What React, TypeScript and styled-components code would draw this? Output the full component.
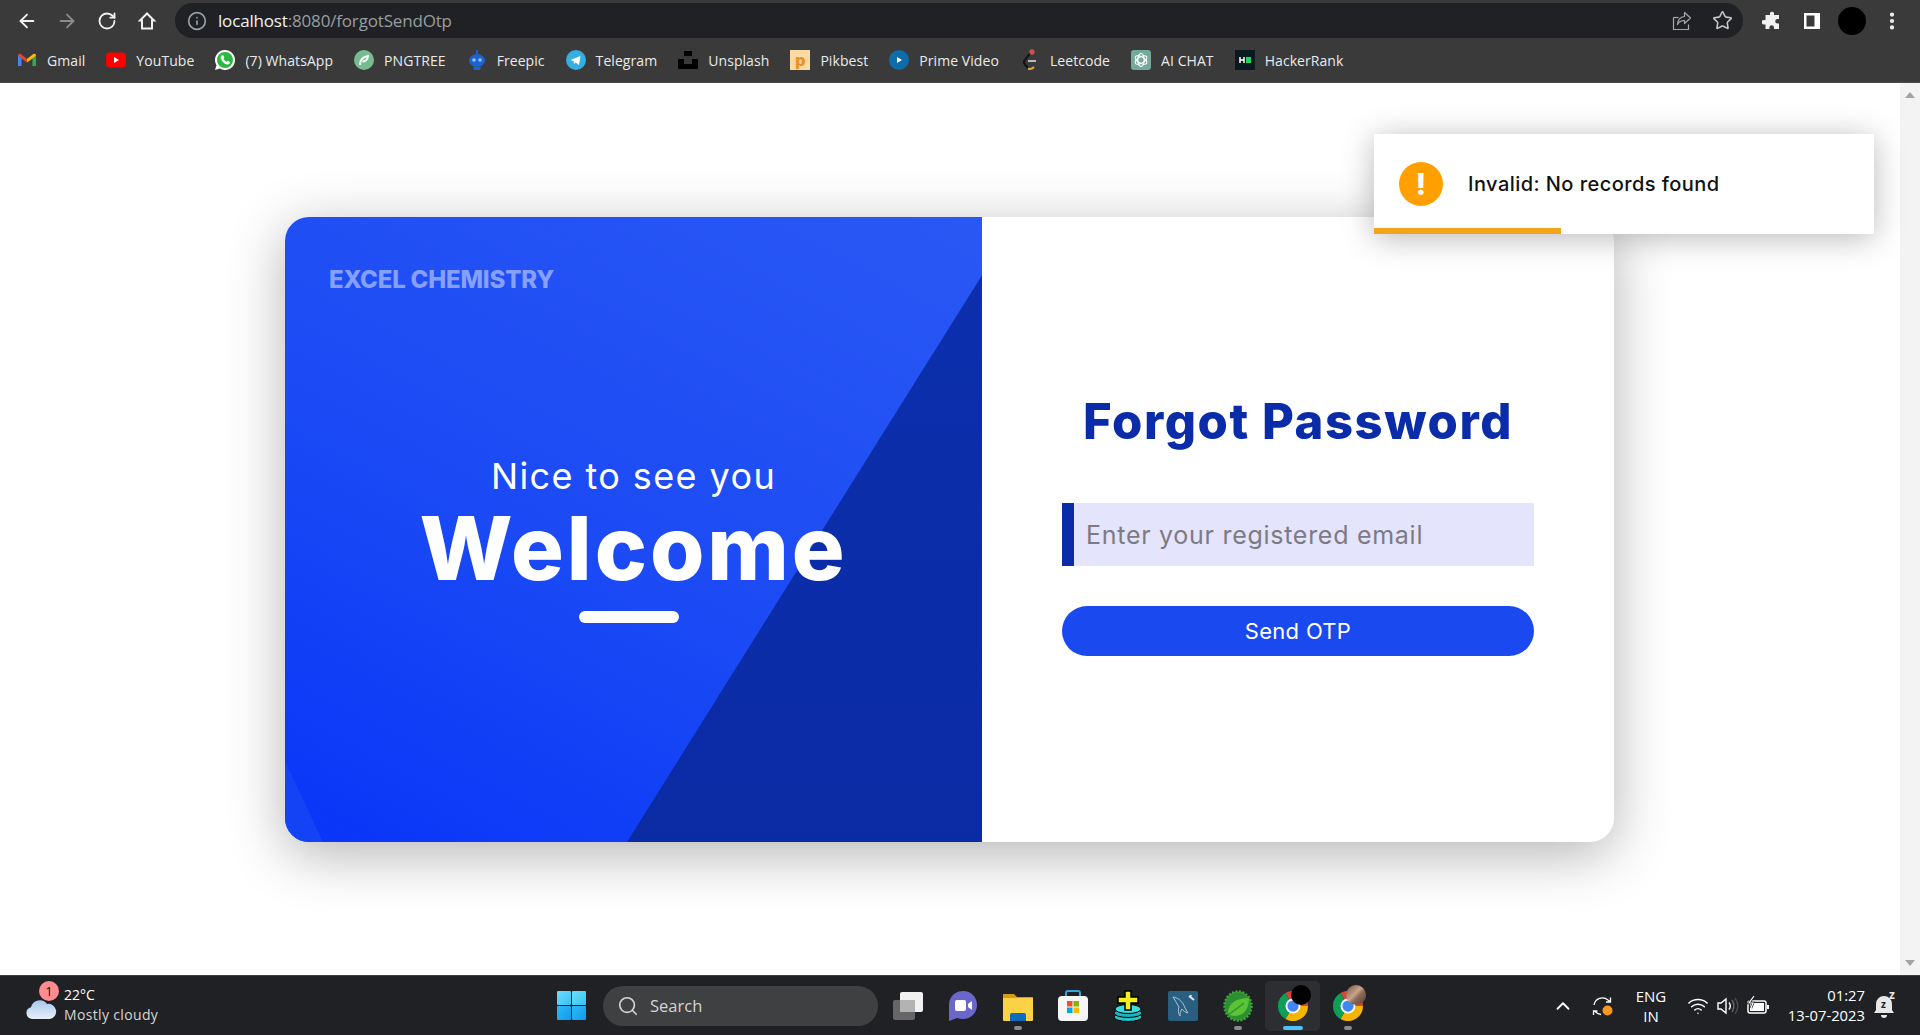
import React from 'react';
import styled, { createGlobalStyle } from 'styled-components';
import { ArrowLeft, ArrowRight, RotateCw, Info, Star, Search, ChevronUp, Wifi, MoreVertical } from 'lucide-react';

const GlobalStyle = createGlobalStyle`
  html, body {
    margin: 0;
    padding: 0;
    height: 100%;
    overflow: hidden;
    background: #fff;
  }
  * {
    box-sizing: border-box;
  }
`;

const Screen = styled.div`
  width: 100%;
  height: 100vh;
  display: flex;
  flex-direction: column;
  font-family: 'Open Sans', 'Noto Sans', sans-serif;
`;

/* browser chrome */
const BrowserBar = styled.header`
  height: 83px;
  flex: none;
  background: #3a3a3a;
  border-bottom: 1px solid #4a4a4a;
`;

const Toolbar = styled.div`
  height: 41px;
  padding: 3px 8px 0 7px;
  display: flex;
  align-items: flex-start;
`;

const ToolButton = styled.div<{ $dim?: boolean }>`
  width: 40px;
  height: 35px;
  flex: none;
  display: flex;
  align-items: center;
  justify-content: center;
  color: ${(p) => (p.$dim ? '#8b8b8b' : '#f1f1f1')};
`;

const UrlBar = styled.div`
  flex: 1;
  height: 35px;
  margin: 0 9px 0 8px;
  padding: 0 1px 0 12px;
  display: flex;
  align-items: center;
  background: #202124;
  border-radius: 18px;
  color: #9aa0a6;
`;

const UrlText = styled.div`
  flex: 1;
  margin-left: 11px;
  font-size: 17px;
  letter-spacing: -0.17px;
  color: #9a9da1;
  b {
    font-weight: 400;
    color: #f1f3f4;
  }
`;

const Avatar = styled.span`
  width: 28px;
  height: 28px;
  border-radius: 50%;
  background: #000;
`;

const Bookmarks = styled.nav`
  height: 41px;
  padding: 0 0 3px 17px;
  display: flex;
  align-items: center;
  gap: 21px;
`;

const Bookmark = styled.div`
  display: flex;
  align-items: center;
  gap: 10px;
  font-size: 14px;
  letter-spacing: 0.07px;
  color: #e8eaed;
  white-space: nowrap;
  svg {
    display: block;
    flex: none;
  }
`;

const PikbestMark = styled.span`
  width: 20px;
  height: 20px;
  flex: none;
  display: flex;
  align-items: center;
  justify-content: center;
  background: #fbd9a0;
  color: #ef8f1e;
  font-family: Inter, sans-serif;
  font-size: 16px;
  font-weight: 800;
  line-height: 18px;
  letter-spacing: 0;
`;

/* page */
const PageRow = styled.div`
  flex: 1;
  min-height: 0;
  display: flex;
`;

const Page = styled.main`
  flex: 1;
  position: relative;
  display: flex;
  align-items: center;
  justify-content: center;
  background: #fff;
`;

const ScrollTrack = styled.div`
  width: 20px;
  flex: none;
  padding: 9px 0;
  display: flex;
  flex-direction: column;
  justify-content: space-between;
  align-items: center;
  background: #f3f3f3;
`;

const ScrollArrow = styled.span<{ $down?: boolean }>`
  width: 0;
  height: 0;
  border-left: 5px solid transparent;
  border-right: 5px solid transparent;
  ${(p) => (p.$down ? 'border-top: 6px solid #a3a3a3;' : 'border-bottom: 6px solid #a3a3a3;')}
`;

const Card = styled.section`
  width: 1329px;
  height: 625px;
  margin: 1px 1px 0 0;
  flex: none;
  display: flex;
  border-radius: 24px;
  background: #fff;
  box-shadow: 0 12px 56px rgba(0, 0, 0, 0.3);
  font-family: Inter, 'Liberation Sans', sans-serif;
`;

const WelcomePanel = styled.div`
  width: 697px;
  flex: none;
  position: relative;
  overflow: hidden;
  padding: 48px 44px;
  display: flex;
  flex-direction: column;
  border-radius: 24px 0 0 24px;
  color: #fff;
  background: linear-gradient(28deg, #0835f8 0%, #1b4af5 45%, #2a58f4 100%);
  &::before {
    content: '';
    position: absolute;
    inset: 0;
    background: linear-gradient(180deg, #0c2fae, #0b2ba5);
    clip-path: polygon(100% 9.3%, 100% 100%, 342px 100%);
  }
  &::after {
    content: '';
    position: absolute;
    inset: 0;
    background: #1442f5;
    clip-path: polygon(0 87%, 38px 100%, 0 100%);
  }
`;

const Brand = styled.div`
  position: relative;
  z-index: 1;
  font-size: 24px;
  line-height: 30px;
  font-weight: 800;
  letter-spacing: -0.2px;
  color: #86a0ff;
`;

const Greeting = styled.div`
  position: relative;
  z-index: 1;
  margin-top: 159px;
  display: flex;
  flex-direction: column;
  align-items: center;
`;

const Nice = styled.div`
  font-size: 36px;
  line-height: 44px;
  font-weight: 400;
  letter-spacing: 1.4px;
`;

const BigWelcome = styled.div`
  margin-top: 4px;
  font-size: 88px;
  line-height: 92px;
  font-weight: 800;
  letter-spacing: 2.9px;
`;

const Underline = styled.span`
  width: 100px;
  height: 12px;
  margin: 17px 10px 0 0;
  border-radius: 6px;
  background: #fff;
`;

const FormPanel = styled.div`
  flex: 1;
  padding-top: 174px;
  display: flex;
  flex-direction: column;
  align-items: center;
`;

const Title = styled.h1`
  margin: 0;
  font-size: 49px;
  line-height: 61px;
  font-weight: 800;
  letter-spacing: 1.55px;
  white-space: nowrap;
  color: #0a2ca9;
`;

const EmailInput = styled.input`
  width: 472px;
  height: 63px;
  margin-top: 51px;
  padding: 0 12px;
  border: 0;
  border-left: 12px solid #0a2ca9;
  outline: none;
  background: #e4e4fc;
  font-family: inherit;
  font-size: 25px;
  letter-spacing: 0.72px;
  &::placeholder {
    color: #7d7a84;
    opacity: 1;
  }
`;

const SendButton = styled.button`
  width: 472px;
  height: 50px;
  margin-top: 40px;
  border: 0;
  border-radius: 25px;
  background: #1a49f0;
  color: #fff;
  font-family: inherit;
  font-size: 22px;
  font-weight: 400;
  letter-spacing: 0.3px;
`;

const Toast = styled.div`
  position: absolute;
  top: 51px;
  right: 26px;
  width: 500px;
  height: 100px;
  padding: 0 25px;
  display: flex;
  align-items: center;
  gap: 25px;
  background: #fff;
  box-shadow: 0 4px 30px rgba(0, 0, 0, 0.28);
  font-family: Inter, 'Liberation Sans', sans-serif;
  font-size: 20px;
  font-weight: 450;
  letter-spacing: 0.45px;
  color: #111;
`;

const ToastIcon = styled.span`
  width: 44px;
  height: 44px;
  flex: none;
  border-radius: 50%;
  display: flex;
  align-items: center;
  justify-content: center;
  background: #ffa000;
  color: #fff;
  font-size: 30px;
  font-weight: 800;
`;

const ToastProgress = styled.span`
  position: absolute;
  left: 0;
  bottom: 0;
  height: 6px;
  background: #f5a31a;
`;

/* windows taskbar */
const Taskbar = styled.footer`
  height: 60px;
  flex: none;
  display: flex;
  align-items: center;
  background: #202124;
  border-top: 1px solid #3c3d40;
  color: #fff;
  font-size: 14px;
`;

const Weather = styled.div`
  width: 557px;
  flex: none;
  padding-left: 25px;
  display: flex;
  align-items: center;
  gap: 9px;
`;

const WeatherIcon = styled.div`
  position: relative;
  width: 30px;
  height: 24px;
  margin-top: 4px;
`;

const WeatherBadge = styled.span`
  position: absolute;
  top: -15px;
  left: 14px;
  width: 20px;
  height: 20px;
  border-radius: 50%;
  display: flex;
  align-items: center;
  justify-content: center;
  background: #ff8b90;
  color: #111;
  font-size: 13px;
`;

const WeatherText = styled.div`
  margin-top: -2px;
  line-height: 20px;
  span {
    display: block;
    color: #d6d6d6;
    letter-spacing: 0.35px;
  }
`;

const StartLogo = styled.div`
  width: 29px;
  height: 29px;
  margin-right: 17px;
  flex: none;
  display: grid;
  grid-template-columns: 1fr 1fr;
  gap: 1px;
`;

const StartPane = styled.span<{ $top?: boolean }>`
  border-radius: 1px;
  background: ${(p) => (p.$top ? 'linear-gradient(135deg, #6fdcfb, #36c3f5)' : 'linear-gradient(135deg, #2fb8f6, #0f9af0)')};
`;

const SearchPill = styled.div`
  width: 275px;
  height: 40px;
  margin-right: 2px;
  flex: none;
  padding-left: 14px;
  display: flex;
  align-items: center;
  gap: 11px;
  border-radius: 20px;
  background: #3f4042;
  font-size: 16.5px;
  color: #d4d4d4;
`;

const TaskCell = styled.div<{ $active?: boolean }>`
  position: relative;
  width: 55px;
  height: 50px;
  flex: none;
  display: flex;
  align-items: center;
  justify-content: center;
  border-radius: 5px;
  background: ${(p) => (p.$active ? '#2d2e31' : 'transparent')};
  svg {
    display: block;
  }
`;

const TaskDot = styled.span<{ $active?: boolean }>`
  position: absolute;
  left: 50%;
  bottom: 1px;
  width: ${(p) => (p.$active ? '20px' : '8px')};
  height: 4px;
  margin-left: ${(p) => (p.$active ? '-10px' : '-4px')};
  border-radius: 2px;
  background: ${(p) => (p.$active ? '#4cc2ff' : '#8a8a8a')};
`;

const Tray = styled.div`
  margin-left: auto;
  padding-right: 20px;
  display: flex;
  align-items: center;
`;

const TrayIcon = styled.div<{ $w?: number; $gap?: number }>`
  position: relative;
  width: ${(p) => p.$w ?? 30}px;
  margin-left: ${(p) => p.$gap ?? 0}px;
  display: flex;
  align-items: center;
  justify-content: center;
  svg {
    display: block;
  }
`;

const SnoozeZ = styled.span<{ $big?: boolean }>`
  position: absolute;
  top: ${(p) => (p.$big ? '-3px' : '6px')};
  left: ${(p) => (p.$big ? '17px' : '9px')};
  font-size: ${(p) => (p.$big ? '12px' : '10px')};
  line-height: 12px;
  font-weight: 700;
  color: ${(p) => (p.$big ? '#e8e8e8' : '#202124')};
`;

const Lang = styled.div`
  width: 50px;
  margin: 0 7px 0 8px;
  text-align: center;
  line-height: 20px;
  font-size: 15px;
`;

const Clock = styled.div`
  width: 92px;
  margin: -2px 7px 0 0;
  text-align: right;
  line-height: 20px;
  font-size: 14.8px;
`;

const ProfileBadge = styled.span<{ $photo?: boolean }>`
  position: absolute;
  top: 4px;
  left: 26px;
  width: 20px;
  height: 20px;
  border-radius: 50%;
  background: ${(p) => (p.$photo ? 'linear-gradient(135deg, #6f5142, #c9a48a 45%, #8a6a58 60%, #5b3f30)' : '#000')};
`;

const GmailIcon = () => (
  <svg width="20" height="20" viewBox="0 0 20 20">
    <path d="M1 5v11h3.5V8.5z" fill="#4285f4" />
    <path d="M19 5v11h-3.5V8.5z" fill="#34a853" />
    <path d="M4.5 8.5 10 12.500V9L4 4.200C2.600 3.200 1 4 1 5.600z" fill="#ea4335" />
    <path d="M15.5 8.5 10 12.500V9l6-4.800c1.400-1 3-.2 3 1.400z" fill="#fbbc04" />
  </svg>
);
const YoutubeIcon = () => (
  <svg width="20" height="20" viewBox="0 0 20 20">
    <rect y="2.5" width="20" height="15" rx="4" fill="#f00" />
    <path d="M8 7v6l5-3z" fill="#fff" />
  </svg>
);
const WhatsappIcon = () => (
  <svg width="20" height="20" viewBox="0 0 20 20">
    <path d="M10 0a10 10 0 0 0-8.500 15.200L0 20l4.900-1.400A10 10 0 1 0 10 0z" fill="#fff" />
    <circle cx="10" cy="10" r="8" fill="#2bb741" />
    <path d="M6.800 5.200c-1 .8-1.500 2-.9 3.600 1 2.600 3 4.700 5.600 5.600 1.700.5 3-.2 3.500-1.300l-.3-1.400-2.100-1-1 1.100c-1.300-.5-2.600-1.800-3.100-3.100l.9-1-.9-2.200z" fill="#fff" />
  </svg>
);
const PngtreeIcon = () => (
  <svg width="20" height="20" viewBox="0 0 20 20">
    <circle cx="10" cy="10" r="10" fill="#75bd90" />
    <path d="M6 15c0-5 2-8 8-9-.5 4-2.500 5.500-5.500 5.500" fill="none" stroke="#fff" strokeWidth="2" />
  </svg>
);
const FreepicIcon = () => (
  <svg width="20" height="20" viewBox="0 0 20 20">
    <path d="M10 0v4" stroke="#1f66d6" strokeWidth="1.500" />
    <ellipse cx="10" cy="10.500" rx="8" ry="6.500" fill="#1c63d2" />
    <path d="M6 17h8l-1 3H7z" fill="#1c63d2" />
    <circle cx="7" cy="10" r="1.800" fill="#9cc2f5" />
    <circle cx="13" cy="10" r="1.800" fill="#9cc2f5" />
  </svg>
);
const TelegramIcon = () => (
  <svg width="20" height="20" viewBox="0 0 20 20">
    <circle cx="10" cy="10" r="10" fill="#37aee2" />
    <path d="M4.500 10 14.500 6l-1.500 9-3.500-2.500L8 14l-.4-3z" fill="#fff" />
  </svg>
);
const UnsplashIcon = () => (
  <svg width="20" height="20" viewBox="0 0 20 20">
    <path d="M6 1h8v5H6zM0 9h6v5h8V9h6v10H0z" fill="#000" />
  </svg>
);
const PikbestIcon = () => <PikbestMark>p</PikbestMark>;
const PrimeIcon = () => (
  <svg width="20" height="20" viewBox="0 0 20 20">
    <circle cx="10" cy="10" r="10" fill="#0f6cab" />
    <path d="M8 7v6l5-3z" fill="#fff" />
  </svg>
);
const LeetcodeIcon = () => (
  <svg width="20" height="22" viewBox="0 0 20 22">
    <path d="M11 3 4.500 11.500c-1 1.500-.5 3 .5 4l3.500 4" fill="none" stroke="#111" strokeWidth="2" />
    <path d="M8 19.500c2 1 4 .5 6-1.500" fill="none" stroke="#e7a13f" strokeWidth="2" />
    <path d="M8 12h8" stroke="#c9c9c9" strokeWidth="1.800" />
    <circle cx="12" cy="3" r="2.700" fill="#c75450" />
  </svg>
);
const OpenAiIcon = () => (
  <svg width="20" height="20" viewBox="0 0 20 20">
    <rect width="20" height="20" rx="3" fill="#74aa9c" />
    <g fill="none" stroke="#fff" strokeWidth="1.200">
      <ellipse cx="10" cy="10" rx="3.200" ry="6.500" />
      <ellipse cx="10" cy="10" rx="3.200" ry="6.500" transform="rotate(60 10 10)" />
      <ellipse cx="10" cy="10" rx="3.200" ry="6.500" transform="rotate(120 10 10)" />
    </g>
  </svg>
);
const HackerRankIcon = () => (
  <svg width="20" height="20" viewBox="0 0 20 20">
    <rect width="20" height="20" fill="#0b1a20" />
    <path d="M5 7v6M9 7v6M5 10h4" stroke="#fff" strokeWidth="1.500" />
    <rect x="11" y="7" width="5" height="6" fill="#1ed760" />
  </svg>
);

const bookmarks: { label: string; Icon: React.FC }[] = [
  { label: 'Gmail', Icon: GmailIcon },
  { label: 'YouTube', Icon: YoutubeIcon },
  { label: '(7) WhatsApp', Icon: WhatsappIcon },
  { label: 'PNGTREE', Icon: PngtreeIcon },
  { label: 'Freepic', Icon: FreepicIcon },
  { label: 'Telegram', Icon: TelegramIcon },
  { label: 'Unsplash', Icon: UnsplashIcon },
  { label: 'Pikbest', Icon: PikbestIcon },
  { label: 'Prime Video', Icon: PrimeIcon },
  { label: 'Leetcode', Icon: LeetcodeIcon },
  { label: 'AI CHAT', Icon: OpenAiIcon },
  { label: 'HackerRank', Icon: HackerRankIcon },
];

const HomeIcon = () => (
  <svg width="20" height="20" viewBox="0 0 20 20" fill="none" stroke="currentColor" strokeWidth="2">
    <path d="M10 2.500 3 9.500h2v8h10v-8h2z" strokeLinejoin="miter" />
  </svg>
);
const ShareIcon = () => (
  <svg width="20" height="20" viewBox="0 0 20 20" fill="none" stroke="#a5a8ac" strokeWidth="1.200">
    <path d="M1.500 6.500v12h15v-5" />
    <path d="M1.500 6.500h5" />
    <path d="M12.500 1.500 18.500 7l-6 5.500V9.500c-3.500 0-5.500 1-7 4 .3-4.500 3-7.500 7-8z" strokeLinejoin="round" />
  </svg>
);
const PuzzleIcon = () => (
  <svg width="20" height="20" viewBox="0 0 20 20" fill="currentColor">
    <path d="M8 2a2.200 2.200 0 0 1 4 0v2h5v4h-1.500a2.300 2.300 0 0 0 0 4.600H17V18h-5v-1.500a2.300 2.300 0 0 0-4.600 0V18H3.500v-4.500H2a2.300 2.300 0 0 1 0-4.600h1.500V4H8z" />
  </svg>
);
const SidePanelIcon = () => (
  <svg width="20" height="20" viewBox="0 0 20 20">
    <path d="M2 2h16v16H2z" fill="#fff" />
    <path d="M4.500 4.500h8v11h-8z" fill="#3a3a3a" />
  </svg>
);
const CloudIcon = () => (
  <svg width="32" height="24" viewBox="0 0 30 24">
    <defs>
      <linearGradient id="cloudFill" x1="0" y1="0" x2="0" y2="1">
        <stop offset="0" stopColor="#a9c6ee" />
        <stop offset="1" stopColor="#e6eefa" />
      </linearGradient>
    </defs>
    <path d="M6 23a6 6 0 0 1-1-11.800A9 9 0 0 1 21 8a7.500 7.500 0 0 1 3 15z" fill="url(#cloudFill)" />
  </svg>
);
const TaskViewIcon = () => (
  <svg width="32" height="32" viewBox="0 0 32 32">
    <rect x="1" y="10" width="22" height="20" rx="2" fill="#666" />
    <rect x="8" y="2" width="23" height="20" rx="2" fill="#f1f1f1" />
    <rect x="8" y="10" width="15" height="12" fill="#b3b3b3" />
  </svg>
);
const MeetIcon = () => (
  <svg width="30" height="32" viewBox="0 0 30 32">
    <path d="M15 1C7 1 1 7 1 15v16l8-3c2 .7 4 1 6 1 8 0 14-6 14-14S23 1 15 1z" fill="#6b66c9" />
    <rect x="7" y="10" width="11" height="11" rx="2" fill="#fff" />
    <path d="M20 14l4-3v9l-4-3z" fill="#fff" />
  </svg>
);
const FolderIcon = () => (
  <svg width="30" height="30" viewBox="0 0 30 30">
    <path d="M0 3h11l3 3h16v5H0z" fill="#d79c18" />
    <rect y="7" width="30" height="23" rx="1" fill="#fbd246" />
    <path d="M7 30v-6a2 2 0 0 1 2-2h12a2 2 0 0 1 2 2v6z" fill="#0f6cbd" />
  </svg>
);
const StoreIcon = () => (
  <svg width="30" height="32" viewBox="0 0 30 32">
    <path d="M8 8V3a2 2 0 0 1 2-2h10a2 2 0 0 1 2 2v5" fill="none" stroke="#39a3dc" strokeWidth="2" />
    <rect y="6" width="30" height="25" rx="4" fill="#f6f6f6" />
    <rect x="9" y="11" width="5.500" height="5.500" fill="#f25022" />
    <rect x="15.500" y="11" width="5.500" height="5.500" fill="#7fba00" />
    <rect x="9" y="17.500" width="5.500" height="5.500" fill="#00a4ef" />
    <rect x="15.500" y="17.500" width="5.500" height="5.500" fill="#ffb900" />
  </svg>
);
const StackPlusIcon = () => (
  <svg width="30" height="32" viewBox="0 0 30 32">
    <ellipse cx="15" cy="27" rx="14" ry="4.500" fill="#27c3c9" stroke="#000" />
    <ellipse cx="15" cy="23" rx="14" ry="4.500" fill="#1ab3bd" stroke="#000" />
    <ellipse cx="15" cy="19" rx="13" ry="4.500" fill="#3bdde0" stroke="#000" />
    <path d="M12 1h6v6h7v6h-7v7h-6v-7H5V7h7z" fill="#f7f01f" stroke="#000" strokeWidth="1.500" />
  </svg>
);
const MysqlIcon = () => (
  <svg width="30" height="30" viewBox="0 0 30 30">
    <rect width="30" height="30" rx="2" fill="#2b5f82" />
    <path d="M5 6c6 1 10 5 12 11l3 5c-3-1-5-2-6-4-2 3-2 5-2 7-2-3-2-6-1-9C9 13 7 9 5 6z" fill="none" stroke="#a9c4d6" strokeWidth="1" />
    <path d="M21 5l5 4M23 4l-1 3" stroke="#dbe8f0" strokeWidth="2" />
  </svg>
);
const SpringIcon = () => (
  <svg width="30" height="32" viewBox="0 0 30 32">
    <ellipse cx="15" cy="16" rx="13.500" ry="14.500" fill="#2d8f30" strokeDasharray="2 1.500" stroke="#3aa63c" strokeWidth="2.500" />
    <path d="M5 23C5 13 14 8 26 8c0 11-5 18-15 18-2 0-4.500-1-6-3z" fill="#5cc238" />
    <path d="M6 24C11 21 16 17 21 13" stroke="#2d8f30" strokeWidth="1.200" fill="none" />
  </svg>
);
const ChromeIcon = () => (
  <svg width="30" height="30" viewBox="0 0 32 32">
    <path d="M16 16 8 2.140A16 16 0 0 1 32 16z" fill="#db4437" />
    <path d="M16 16h16A16 16 0 0 1 8 29.860z" fill="#f4b400" />
    <path d="M16 16 8 29.860A16 16 0 0 1 8 2.140z" fill="#0f9d58" />
    <circle cx="16" cy="16" r="8" fill="#fff" />
    <circle cx="16" cy="16" r="6" fill="#4285f4" />
  </svg>
);
const SyncIcon = () => (
  <svg width="24" height="24" viewBox="0 0 24 24">
    <g fill="none" stroke="#fff" strokeWidth="1.300">
      <path d="M3 11a8.500 8.500 0 0 1 14-5l2.500 2M19.500 3.500V8H15" />
      <path d="M4 17.500c2 2 3.500 3 6 3M2.500 21v-4h4" />
    </g>
    <circle cx="16.500" cy="16.500" r="5" fill="#f7981d" />
  </svg>
);
const SpeakerIcon = () => (
  <svg width="24" height="20" viewBox="0 0 24 20" fill="none" stroke="#fff" strokeWidth="1.400">
    <path d="M2 7v6h3l5 4V3L5 7z" />
    <path d="M13 6.500c1.500 2 1.500 5 0 7" />
    <path d="M16 4c2.500 3.500 2.500 8.500 0 12" stroke="#6a6a6a" />
    <path d="M19 2c3.500 5 3.500 11 0 16" stroke="#4a4a4a" />
  </svg>
);
const BatteryIcon = () => (
  <svg width="24" height="22" viewBox="0 0 24 22" fill="none">
    <rect x="2" y="6" width="18" height="12" rx="2" stroke="#fff" strokeWidth="1.500" />
    <rect x="4" y="8" width="14" height="8" fill="#fff" />
    <rect x="21" y="10" width="2" height="4" fill="#fff" />
    <path d="M8 1 3 8h4l-2 5" stroke="#202124" strokeWidth="2.500" />
    <path d="M8 1 3 8h4l-2 5" stroke="#fff" strokeWidth="1.200" />
  </svg>
);
const BellIcon = () => (
  <svg width="26" height="28" viewBox="0 0 26 28">
    <path d="M11 4a8 8 0 0 0-8 8v6l-2 3h20l-2-3v-6a8 8 0 0 0-8-8z" fill="#e8e8e8" />
    <path d="M8 23a3 3 0 0 0 6 0z" fill="#e8e8e8" />
  </svg>
);

const App: React.FC = () => {
  const toastProgress = 37.4;

  return (
    <Screen>
      <GlobalStyle />
      <BrowserBar>
        <Toolbar>
          <ToolButton><ArrowLeft size={22} /></ToolButton>
          <ToolButton $dim><ArrowRight size={22} /></ToolButton>
          <ToolButton><RotateCw size={20} strokeWidth={2.2} /></ToolButton>
          <ToolButton><HomeIcon /></ToolButton>
          <UrlBar>
            <Info size={20} />
            <UrlText><b>localhost</b>:8080/forgotSendOtp</UrlText>
            <ToolButton $dim><ShareIcon /></ToolButton>
            <ToolButton $dim><Star size={21} strokeWidth={1.8} color="#c4c7c5" /></ToolButton>
          </UrlBar>
          <ToolButton><PuzzleIcon /></ToolButton>
          <ToolButton><SidePanelIcon /></ToolButton>
          <ToolButton><Avatar /></ToolButton>
          <ToolButton><MoreVertical size={22} strokeWidth={2.6} /></ToolButton>
        </Toolbar>
        <Bookmarks>
          {bookmarks.map(({ label, Icon }) => (
            <Bookmark key={label}>
              <Icon />
              {label}
            </Bookmark>
          ))}
        </Bookmarks>
      </BrowserBar>

      <PageRow>
        <Page>
          <Card>
            <WelcomePanel>
              <Brand>EXCEL CHEMISTRY</Brand>
              <Greeting>
                <Nice>Nice to see you</Nice>
                <BigWelcome>Welcome</BigWelcome>
                <Underline />
              </Greeting>
            </WelcomePanel>
            <FormPanel>
              <Title>Forgot Password</Title>
              <EmailInput placeholder="Enter your registered email" />
              <SendButton>Send OTP</SendButton>
            </FormPanel>
          </Card>
          <Toast>
            <ToastIcon>!</ToastIcon>
            Invalid: No records found
            <ToastProgress style={{ width: `${toastProgress}%` }} />
          </Toast>
        </Page>
        <ScrollTrack>
          <ScrollArrow />
          <ScrollArrow $down />
        </ScrollTrack>
      </PageRow>

      <Taskbar>
        <Weather>
          <WeatherIcon>
            <CloudIcon />
            <WeatherBadge>1</WeatherBadge>
          </WeatherIcon>
          <WeatherText>
            22°C
            <span>Mostly cloudy</span>
          </WeatherText>
        </Weather>
        <StartLogo>
          <StartPane $top />
          <StartPane $top />
          <StartPane />
          <StartPane />
        </StartLogo>
        <SearchPill>
          <Search size={22} strokeWidth={1.8} />
          Search
        </SearchPill>
        <TaskCell><TaskViewIcon /></TaskCell>
        <TaskCell><MeetIcon /></TaskCell>
        <TaskCell><FolderIcon /><TaskDot /></TaskCell>
        <TaskCell><StoreIcon /></TaskCell>
        <TaskCell><StackPlusIcon /></TaskCell>
        <TaskCell><MysqlIcon /></TaskCell>
        <TaskCell><SpringIcon /><TaskDot /></TaskCell>
        <TaskCell $active><ChromeIcon /><ProfileBadge /><TaskDot $active /></TaskCell>
        <TaskCell><ChromeIcon /><ProfileBadge $photo /><TaskDot /></TaskCell>
        <Tray>
          <TrayIcon><ChevronUp size={22} strokeWidth={2} /></TrayIcon>
          <TrayIcon $gap={10}><SyncIcon /></TrayIcon>
          <Lang>ENG<br />IN</Lang>
          <TrayIcon><Wifi size={22} strokeWidth={1.6} /></TrayIcon>
          <TrayIcon><SpeakerIcon /></TrayIcon>
          <TrayIcon><BatteryIcon /></TrayIcon>
          <Clock>01:27<br />13-07-2023</Clock>
          <TrayIcon $w={28}>
            <BellIcon />
            <SnoozeZ>z</SnoozeZ>
            <SnoozeZ $big>z</SnoozeZ>
          </TrayIcon>
        </Tray>
      </Taskbar>
    </Screen>
  );
};

export default App;
